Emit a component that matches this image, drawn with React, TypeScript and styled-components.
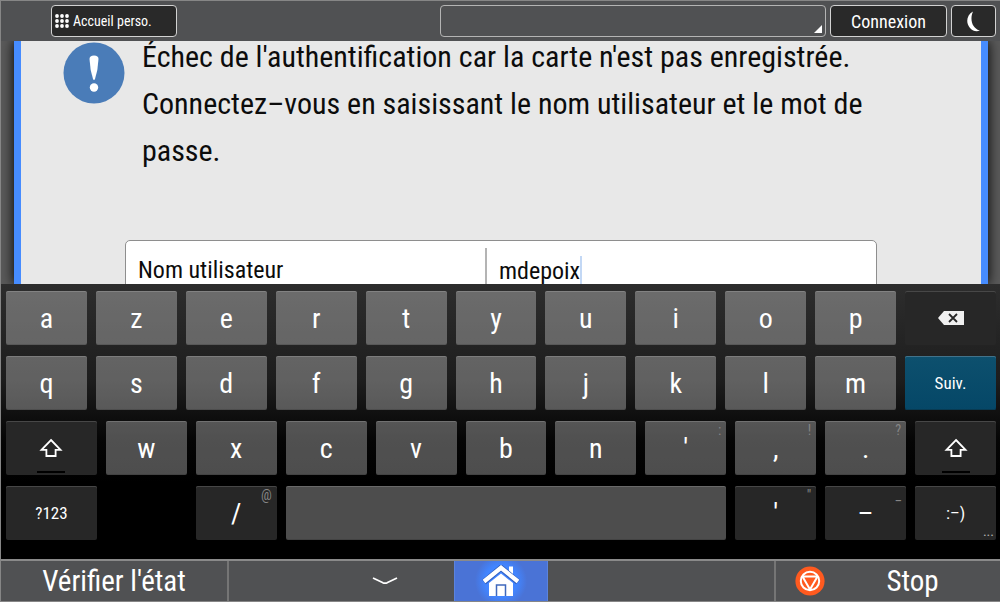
import React, { useState } from "react";
import styled, { createGlobalStyle, css } from "styled-components";

const GlobalStyle = createGlobalStyle`
  *, *::before, *::after { box-sizing: border-box; }
  body { margin: 0; background: #000; }
  button, input, select { font: inherit; color: inherit; margin: 0; padding: 0; border: 0; }
`;

const Screen = styled.div`
  display: flex;
  flex-direction: column;
  height: 100vh;
  overflow: hidden;
  border: 1px solid #868686;
  border-right: 0;
  background: #505153;
  color: #fff;
  font-family: "Roboto Condensed", Roboto, sans-serif;
`;

const TopBar = styled.header`
  display: flex;
  flex: none;
  gap: 4px;
  height: 40px;
  padding: 4px 4px 4px 50px;
  background: #505153;
`;

const BarButton = styled.button<{ $width: number; $size?: number }>`
  display: flex;
  align-items: center;
  justify-content: center;
  gap: 4px;
  flex: 0 0 ${(p) => p.$width}px;
  border: 1px solid #d2d2d2;
  border-radius: 4px;
  background: #292929;
  font-size: ${(p) => p.$size ?? 14}px;
`;

const HomeShortcut = styled(BarButton)`
  justify-content: flex-start;
  padding-left: 3px;
  margin-right: auto;
`;

const StatusPicker = styled.button`
  display: flex;
  align-items: flex-end;
  justify-content: flex-end;
  flex: 0 1 386px;
  padding: 3px;
  border: 1px solid #b4b4b4;
  border-radius: 4px;
  background: #505153;
`;

const Backdrop = styled.main`
  flex: 1;
  min-height: 0;
  padding: 0 12px 0 13px;
  overflow: hidden;
  background: #5a5a5a;
`;

const Panel = styled.form`
  height: 100%;
  overflow: hidden;
  border: solid #468cff;
  border-width: 0 7px;
  background: #e8e8e8;
  box-shadow: 0 0 12px #000;
  color: #0c0c0c;
`;

const Message = styled.div`
  display: flex;
  align-items: flex-start;
  gap: 17px;
  margin-top: -8px;
  padding: 0 110px 0 42px;
`;

const AlertIcon = styled.svg`
  flex: none;
  margin-top: 8px;
`;

const MessageText = styled.p`
  margin: 0;
  font-size: 30px;
  line-height: 47px;
`;

const FieldRow = styled.div`
  display: flex;
  height: 60px;
  margin: 66px 104px 0;
  border: 1px solid #8e8e8e;
  border-radius: 5px;
  background: #fff;
  font-size: 24px;
`;

const FieldLabel = styled.label`
  flex: 0 1 359px;
  padding: 14px 0 0 12px;
  line-height: 30px;
`;

const FieldValue = styled.div`
  flex: 1;
  margin-top: 7px;
  padding: 8px 0 0 12px;
  border-left: 2px solid #b4b4b4;
`;

const FieldInput = styled.input`
  field-sizing: content;
  height: 30px;
  border-right: 2px solid #c3d8f5;
  outline: 0;
  background: transparent;
`;

const Keyboard = styled.section`
  display: flex;
  flex: none;
  flex-direction: column;
  gap: 11px;
  padding: 7px 4px 19px 5px;
  background: linear-gradient(#2d2d2d, #1d1d1d 35%, #050505 57%, #000 72%);
`;

const KeyRow = styled.div`
  display: flex;
  gap: 9px;
`;

const keyFaces = {
  light: css`
    background: rgba(255, 255, 255, 0.3);
    box-shadow: inset 0 1px rgba(255, 255, 255, 0.16), inset 0 -1px rgba(0, 0, 0, 0.12);
  `,
  dark: css`
    background: #272727;
    box-shadow: inset 0 1px #474747;
  `,
  action: css`
    background: linear-gradient(#0d506e, #054767);
    box-shadow: inset 0 1px #42728a, inset 0 -1px #083b53;
  `,
};

type Face = keyof typeof keyFaces;

const KeyButton = styled.button<{ $face: Face; $grow: number; $small?: boolean }>`
  position: relative;
  display: flex;
  align-items: center;
  justify-content: center;
  flex: ${(p) => p.$grow} 1 0;
  min-width: 0;
  height: 54px;
  border-radius: 2px;
  font-size: ${(p) => (p.$small ? 17 : 28)}px;
  ${(p) => keyFaces[p.$face]}
`;

const KeyGap = styled.span`
  flex: 81 1 0;
`;

const Hint = styled.span<{ $bottom?: boolean }>`
  position: absolute;
  ${(p) => (p.$bottom ? "right: 2px; bottom: 0; color: #b0b0b0;" : "right: 5px; top: 0; color: #858585;")}
  font-size: 14px;
  line-height: 18px;
`;

const LockBar = styled.span`
  position: absolute;
  bottom: 2px;
  left: 50%;
  width: 28px;
  height: 2px;
  margin-left: -14px;
  background: #000;
`;

const BottomBar = styled.footer`
  display: grid;
  grid-template-columns: 228fr 225fr 94fr 226fr 226fr;
  flex: none;
  height: 42px;
  border-top: 2px solid #8a8a8a;
`;

const BottomButton = styled.button`
  display: flex;
  align-items: center;
  justify-content: center;
  min-width: 0;
  background: #505153;
  font-size: 29px;
`;

const CheckStatus = styled(BottomButton)`
  border-right: 2px solid #757575;
`;

const HideKeyboard = styled(BottomButton)`
  justify-content: flex-end;
  padding-right: 56px;
`;

const HomeButton = styled(BottomButton)`
  border: solid #5b83dd;
  border-width: 0 1px;
  background: radial-gradient(circle at center, #4285ff 16px, #4a73d6 26px);
`;

const StopButton = styled(BottomButton)`
  grid-column: 5;
  padding-left: 19px;
  border-left: 2px solid #757575;
`;

const StopText = styled.span`
  flex: 1;
`;

const GridDots = () => (
  <svg width="14" height="14" viewBox="0 0 14 14" fill="#fff" aria-hidden="true">
    {[2, 7, 12].map((y) => [2, 7, 12].map((x) => <circle key={`${x}-${y}`} cx={x} cy={y} r="1.9" />))}
  </svg>
);

const ShiftIcon = () => (
  <svg width="24" height="20" viewBox="0 0 24 20" fill="none" stroke="#fff" strokeWidth="1.8" aria-hidden="true">
    <path d="M12 2 L21.5 11.8 H16.6 V18 H7.4 V11.8 H2.5 Z" />
  </svg>
);

const BackspaceIcon = () => (
  <svg width="26" height="14" viewBox="0 0 26 14" aria-hidden="true">
    <path d="M0 7 L6 0 H26 V14 H6 Z" fill="#f0f0f0" />
    <path d="M11 3 L19 11 M19 3 L11 11" stroke="#272727" strokeWidth="1.8" />
  </svg>
);

const HouseIcon = () => (
  <svg width="38" height="32" viewBox="0 0 38 32" aria-hidden="true">
    <path d="M27 1.500 H31 V12 L27 8.500 Z" fill="#fff" />
    <path d="M19 8.500 L31 18 V31 H7 V18 Z" fill="#fff" />
    <path d="M2 17 L19 2.800 L36 17" fill="none" stroke="#315fbd" strokeWidth="6" />
    <path d="M2 16.500 L19 2.800 L36 16.500" fill="none" stroke="#fff" strokeWidth="4.200" />
    <path d="M14.500 31 V20 H23.500 V31" fill="none" stroke="#3f68bd" strokeWidth="1.500" />
  </svg>
);

const StopIcon = () => (
  <svg width="30" height="30" viewBox="0 0 30 30" aria-hidden="true">
    <circle cx="15" cy="15" r="14.6" fill="#ff5a1f" />
    <g fill="none" stroke="#fff" strokeWidth="2">
      <circle cx="15" cy="15" r="9.2" />
      <path d="M7.500 10.500 H22.500 L15 23.400 Z" strokeLinejoin="round" />
    </g>
  </svg>
);

type KeySpec = {
  id: string;
  label?: React.ReactNode;
  name?: string;
  face?: Face;
  grow?: number;
  small?: boolean;
  hint?: string;
  hintBottom?: boolean;
  lock?: boolean;
  gap?: boolean;
};

const letters = (text: string): KeySpec[] => text.split("").map((c) => ({ id: c, label: c }));

const rows: KeySpec[][] = [
  [...letters("azertyuiop"), { id: "del", label: <BackspaceIcon />, name: "Effacer", face: "dark", grow: 91 }],
  [...letters("qsdfghjklm"), { id: "next", label: "Suiv.", face: "action", grow: 91, small: true }],
  [
    { id: "shiftL", label: <ShiftIcon />, name: "Maj gauche", face: "dark", grow: 91, lock: true },
    ...letters("wxcvbn"),
    { id: "apos", label: "'", hint: ":" },
    { id: "comma", label: ",", hint: "!" },
    { id: "dot", label: ".", hint: "?" },
    { id: "shiftR", label: <ShiftIcon />, name: "Maj droite", face: "dark", lock: true },
  ],
  [
    { id: "sym", label: "?123", face: "dark", grow: 91, small: true },
    { id: "gap", gap: true },
    { id: "slash", label: "/", face: "dark", hint: "@" },
    { id: "space", name: "Espace", grow: 441 },
    { id: "quote", label: "'", face: "dark", hint: "\"" },
    { id: "dash", label: "–", face: "dark", hint: "_" },
    { id: "smile", label: ":–)", face: "dark", small: true, hint: "...", hintBottom: true },
  ],
];

export default function App() {
  const [user, setUser] = useState("mdepoix");
  return (
    <Screen>
      <GlobalStyle />
      <TopBar>
        <HomeShortcut $width={126}>
          <GridDots />
          Accueil perso.
        </HomeShortcut>
        <StatusPicker aria-label="État">
          <svg width="8" height="8" viewBox="0 0 8 8" aria-hidden="true">
            <path d="M8 0 V8 H0 Z" fill="#fff" />
          </svg>
        </StatusPicker>
        <BarButton $width={117} $size={18}>Connexion</BarButton>
        <BarButton $width={45} aria-label="Veille">
          <svg width="14" height="21" viewBox="0 0 14 21" aria-hidden="true">
            <path d="M6 .5 C-.5 4 -1.500 12 3 17 C6 20.500 10 20.800 13 19.500 C5 17.500 2.500 8 6 .5 Z" fill="#fff" />
          </svg>
        </BarButton>
      </TopBar>
      <Backdrop>
        <Panel onSubmit={(e) => e.preventDefault()}>
          <Message>
            <AlertIcon width="62" height="64" viewBox="0 0 62 64" aria-hidden="true">
              <circle cx="31" cy="32" r="30.5" fill="#4a7cb8" />
              <path d="M26.500 18 Q26.500 14.500 31 14.500 Q35.500 14.500 35.500 18 Q35 29 32 38 Q31 40 30 38 Q27 29 26.500 18 Z" fill="#fff" />
              <circle cx="31" cy="46.5" r="4.2" fill="#fff" />
            </AlertIcon>
            <MessageText>
              Échec de l'authentification car la carte n'est pas enregistrée. Connectez–vous en saisissant le nom
              utilisateur et le mot de passe.
            </MessageText>
          </Message>
          <FieldRow>
            <FieldLabel htmlFor="user">Nom utilisateur</FieldLabel>
            <FieldValue>
              <FieldInput id="user" value={user} onChange={(e) => setUser(e.target.value)} />
            </FieldValue>
          </FieldRow>
        </Panel>
      </Backdrop>
      <Keyboard aria-label="Clavier">
        {rows.map((row, i) => (
          <KeyRow key={i}>
            {row.map((k) =>
              k.gap ? (
                <KeyGap key={k.id} />
              ) : (
                <KeyButton key={k.id} type="button" aria-label={k.name} $face={k.face ?? "light"} $grow={k.grow ?? 81} $small={k.small}>
                  {k.label}
                  {k.hint && <Hint $bottom={k.hintBottom}>{k.hint}</Hint>}
                  {k.lock && <LockBar />}
                </KeyButton>
              )
            )}
          </KeyRow>
        ))}
      </Keyboard>
      <BottomBar>
        <CheckStatus>Vérifier l'état</CheckStatus>
        <HideKeyboard aria-label="Masquer le clavier">
          <svg width="26" height="8" viewBox="0 0 26 8" fill="none" stroke="#fff" strokeWidth="1.8" aria-hidden="true">
            <path d="M1 1 L11 5.800 Q13 6.600 15 5.800 L25 1" />
          </svg>
        </HideKeyboard>
        <HomeButton aria-label="Accueil">
          <HouseIcon />
        </HomeButton>
        <StopButton>
          <StopIcon />
          <StopText>Stop</StopText>
        </StopButton>
      </BottomBar>
    </Screen>
  );
}
